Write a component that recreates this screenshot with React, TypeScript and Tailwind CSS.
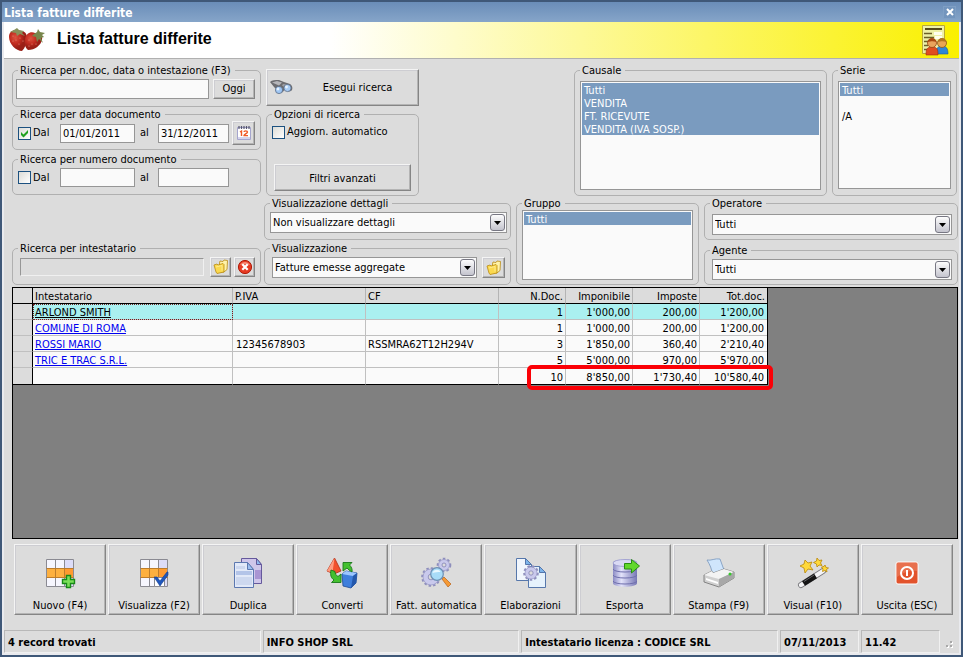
import { type ReactNode } from 'react';
import { clsx } from 'clsx';

const raised =
  'border border-t-[#f4f4f4] border-l-[#f4f4f4] border-r-[#858585] border-b-[#858585] bg-[#dcdcdc] shadow-[inset_-1px_-1px_0_#b4b4b4,inset_1px_1px_0_#cdcdd2]';
const field = 'border border-[#969696] bg-[#fafafa] outline-none';

/* Layout pieces */

function Group({
  title,
  className,
  bodyClassName,
  children,
}: {
  title: string;
  className?: string;
  bodyClassName?: string;
  children: ReactNode;
}) {
  return (
    <fieldset className={clsx('min-w-0 rounded-[5px] border border-[#b0b0b0]', className)}>
      <legend className="ml-[5px] h-3.5 pr-1 pl-0.5 leading-4 whitespace-nowrap">{title}</legend>
      <div className={bodyClassName}>{children}</div>
    </fieldset>
  );
}

function Dropdown({ label, value, className }: { label: string; value: string; className?: string }) {
  return (
    <div className={clsx('relative h-[21px]', className)}>
      <select
        aria-label={label}
        className={clsx(field, 'block h-full w-full appearance-none pl-0.5 leading-4')}
      >
        <option>{value}</option>
      </select>
      <span className="pointer-events-none absolute top-0.5 right-0.5 flex h-[17px] w-[15px] items-center justify-center rounded-[3px] border border-[#777783] bg-linear-to-b from-[#fdfdfd] to-[#c4c4ce]">
        <svg width="7" height="4" viewBox="0 0 7 4">
          <path d="M0 0h7L3.5 4z" fill="#000" />
        </svg>
      </span>
    </div>
  );
}

function ListBox({
  label,
  items,
  selected,
  className,
}: {
  label: string;
  items: string[];
  selected: string[];
  className?: string;
}) {
  return (
    <ul
      role="listbox"
      aria-label={label}
      aria-multiselectable="true"
      className={clsx(field, 'p-px', className)}
    >
      {items.map((item, i) => (
        <li
          key={i}
          role="option"
          aria-selected={selected.includes(item)}
          className={clsx(
            'h-[13px] pl-0.5 leading-4 whitespace-nowrap',
            selected.includes(item) && 'bg-[#7a9bbf] text-white'
          )}
        >
          {item}
        </li>
      ))}
    </ul>
  );
}

function Check({ label, checked }: { label: string; checked?: boolean }) {
  return (
    <label className="flex items-center gap-0.5 leading-4">
      <span className="relative flex">
        <input
          type="checkbox"
          defaultChecked={checked}
          className="peer size-[13px] appearance-none border border-[#1c5180] bg-linear-to-br from-[#dcdcd7] to-white"
        />
        <svg
          viewBox="0 0 13 13"
          className="pointer-events-none absolute inset-0 hidden size-[13px] peer-checked:block"
        >
          <path d="M3 5v3l2.500 2.500L10 6V3L5.500 7.500z" fill="#21a121" />
        </svg>
      </span>
      {label}
    </label>
  );
}

/* Icons */

function Strawberries() {
  return (
    <svg width="38" height="26" viewBox="0 0 38 26">
      <defs>
        <radialGradient id="berry" cx="35%" cy="35%">
          <stop offset="0" stopColor="#dc5340" />
          <stop offset="0.6" stopColor="#c22c20" />
          <stop offset="1" stopColor="#9a1f16" />
        </radialGradient>
      </defs>
      <path d="M1 10C1 4 6 2 10 4c6-1 9 2 9 7 0 5-2 10-5 13C8 24 1 17 1 10z" fill="url(#berry)" />
      <path d="M17 12c1-6 6-8 10-6 5 0 8 3 7 7-1 5-7 10-14 10-3-2-4-7-3-11z" fill="url(#berry)" />
      <path d="m2 5 4-2 3-2 2 2 5 1-2 2 3 3-5-2-3 2-1-3z" fill="#87905a" />
      <path d="m26 7 3-2 1-3 2 3 5 1-3 2 2 2-3 1 2 5-4-4-2 3-1-5-4-1z" fill="#78864c" />
      <g fill="#e8917c">
        <circle cx="5" cy="9" r=".6" />
        <circle cx="5" cy="14" r=".6" />
        <circle cx="8" cy="13" r=".6" />
        <circle cx="12" cy="11" r=".6" />
        <circle cx="11" cy="17" r=".6" />
        <circle cx="15" cy="14" r=".6" />
        <circle cx="21" cy="13" r=".6" />
        <circle cx="24" cy="17" r=".6" />
        <circle cx="21" cy="19" r=".6" />
        <circle cx="28" cy="17" r=".6" />
      </g>
    </svg>
  );
}

function ReportUsers() {
  return (
    <svg width="28" height="32" viewBox="0 0 28 32">
      <path d="M1.500 1.500h22v28h-22z" fill="#eef0a8" stroke="#b9a83a" />
      <path d="M4 4h17v2H4z" fill="#54491c" />
      <path d="M3 9.500h8M3 13.500h10M3 17.500h7M3 21.500h4M3 25.500h4" stroke="#6b6028" strokeWidth="1.500" />
      <path d="M13 8h8v3h-8zM14 12h7v3h-7z" fill="#fffff0" />
      <path d="M15 30c0-6 2-8 6-8s6 2 6 8z" fill="#2f86d6" stroke="#19579a" strokeWidth=".6" />
      <circle cx="21" cy="19" r="4.500" fill="#e9a552" stroke="#8d5413" strokeWidth=".8" />
      <path d="M16.500 18c1-5 8-5 9 0-3-1-5-1-9 0z" fill="#b27620" />
      <path d="M5 31c0-6 1-8 6-8s6 2 6 8z" fill="#e04e20" stroke="#a32c0c" strokeWidth=".6" />
      <circle cx="11" cy="19" r="4.500" fill="#e9a35c" stroke="#96430f" strokeWidth=".8" />
      <path d="M6.500 18c1-5 8-5 9 0-3-1-5-1-9 0z" fill="#a94712" />
    </svg>
  );
}

function Binoculars() {
  return (
    <svg width="24" height="18" viewBox="0 0 24 18">
      <path d="M1 3c2-2 5-2 9-2l5 2 6 2c3 2 3 6 1 7-3 1-5 0-6-3-1 4-4 6-6 4L5 8z" fill="#6d6d71" />
      <path d="M3 3.500 8 2l5 1.500-3 3z" fill="#b6b6ba" />
      <path d="m14 5 4 .5-2 3-3-2z" fill="#a0a0a4" />
      <circle cx="10" cy="11" r="3.600" fill="#9fc6f3" stroke="#5c6d88" strokeWidth=".8" />
      <circle cx="18.500" cy="9" r="3.600" fill="#a9cdf6" stroke="#5c6d88" strokeWidth=".8" />
      <circle cx="9" cy="10" r="1.400" fill="#e7f3ff" />
      <circle cx="17.500" cy="8" r="1.400" fill="#e7f3ff" />
    </svg>
  );
}

function Calendar() {
  return (
    <svg width="16" height="16" viewBox="0 0 16 16">
      <path d="M1.500 2.500h13v12h-13z" fill="#fff" stroke="#a5a5cd" />
      <path d="M2 12h12v2H2z" fill="#d5d5ee" />
      <path d="M3 1v3M5.500 1v3M8 1v3M10.500 1v3M13 1v3" stroke="#55556d" strokeWidth="1.200" />
      <path d="m4 7 1.500-1v5M8 7c0-1.500 3.500-1.500 3.500 0 0 1.300-3.500 2.500-3.500 3.600h4" fill="none" stroke="#f05a28" strokeWidth="1.400" />
    </svg>
  );
}

function Folder() {
  return (
    <svg width="16" height="16" viewBox="0 0 16 16">
      <path d="m6.500 4 .5-2 3 .5L11 1l3.500.5-.5 9-3 2.500H7z" fill="#fff3a8" stroke="#b98a12" strokeWidth=".8" />
      <path d="m1 6 3-1 1 1 5-1.500 1 1V13l-7 1.500L3 13z" fill="#fbd94e" stroke="#b98a12" strokeWidth=".8" />
      <path d="m3 8 6-1.500v5" fill="none" stroke="#fff0a0" strokeWidth=".8" />
    </svg>
  );
}

function Cancel() {
  return (
    <svg width="16" height="16" viewBox="0 0 16 16">
      <circle cx="8" cy="8" r="6.600" fill="#e63a22" stroke="#b01d0b" />
      <path d="M3 6c2-4 8-4 10 0-3-1-7-1-10 0z" fill="#f58b77" />
      <path d="m5.300 5.300 5.400 5.400M10.700 5.300l-5.400 5.400" stroke="#fff" strokeWidth="2.200" />
    </svg>
  );
}

function GridBase() {
  return (
    <>
      <path d="M2.500 2.500h27v27h-27z" fill="#f6f6fe" />
      <path d="M20.500 2.500h9v9h-9zM20.500 20.500h9v9h-9z" fill="#dcdcf8" />
      <path d="M2.500 11.500h27v9h-27z" fill="#fdb040" />
      <path d="M20.500 11.500h9v9h-9z" fill="#ff9a30" />
      <path d="M2.500 2.500h27v27h-27zM11.500 2.500v27M20.500 2.500v27M2.500 11.500h27M2.500 20.500h27" fill="none" stroke="#8a8a92" />
      <path d="M2.500 11.500h27M2.500 20.500h27M11.500 11.500v9M20.500 11.500v9" stroke="#bd7d2b" />
    </>
  );
}

function GridAdd() {
  return (
    <svg width="32" height="32" viewBox="0 0 32 32">
      <GridBase />
      <path d="M22.500 18.500h4v4h4v4h-4v4h-4v-4h-4v-4h4z" fill="#7be05a" stroke="#178a17" strokeWidth="1.400" />
    </svg>
  );
}

function GridView() {
  return (
    <svg width="32" height="32" viewBox="0 0 32 32">
      <GridBase />
      <path d="M16.500 20.500h10v9h-10z" fill="#fff" stroke="#8a8a92" />
      <path d="M16 20h3l3 4 7-9h1v3l-8 11z" fill="#1f56bd" stroke="#123b8c" strokeWidth=".6" />
    </svg>
  );
}

function Duplicate() {
  return (
    <svg width="32" height="32" viewBox="0 0 32 32">
      <path d="M9.500 1.500h15l5 6v19h-20z" fill="#cfc6ea" stroke="#65599c" />
      <path d="M24.500 1.500v6h5z" fill="#8fb8ee" stroke="#65599c" />
      <path d="M23 13h6v9h-6z" fill="#a995d3" />
      <path d="M2.500 5.500h13l6 7v18h-19z" fill="#e2e9f8" stroke="#5c78b0" />
      <path d="M15.500 5.500v7h6z" fill="#9ec0f0" stroke="#5c78b0" />
      <path d="M4 14h16v4H4z" fill="#b3c4e8" />
      <path d="M4 9h9v3H4zM4 20h16v8H4z" fill="#cdd8ef" />
    </svg>
  );
}

function Convert() {
  return (
    <svg width="32" height="32" viewBox="0 0 32 32">
      <path d="M8.500 1 1 14l7 3 7-3z" fill="#f2512e" stroke="#ad2b12" strokeWidth=".8" />
      <path d="m8.500 1-2 14.500L1 14z" fill="#ff9c80" />
      <path d="m16 17 4-3 11 2-1 10-5 5-8-2z" fill="#3f7fdc" stroke="#1d4a94" strokeWidth=".8" />
      <path d="m16 17 4-3 11 2-4 3z" fill="#9cc6ff" />
      <path d="m27 19 4-3-1 10-5 5z" fill="#2458ac" />
      <path d="M17 5.500h9L23.500 8c2 2 3 4 2.500 7l-3-2c-1-1-1-1-2-2L17 14z" fill="#44c030" stroke="#187818" strokeWidth=".9" />
      <path d="M5 13c-1 5 0 8 3 10l-2.500 2.500H15V17l-3 2.500c-2-1-3-3-3-5z" fill="#44c030" stroke="#187818" strokeWidth=".9" />
    </svg>
  );
}

function Gear({ x, y, r }: { x: number; y: number; r: number }) {
  return (
    <g transform={`translate(${x} ${y})`}>
      <circle r={r} fill="none" stroke="#8e8ebc" strokeWidth="2.600" strokeDasharray="2.400 2" />
      <circle r={r - 0.5} fill="#c9c9ec" stroke="#9a9ac8" strokeWidth=".8" />
      <circle r={r / 3} fill="#dcdcdc" stroke="#8383b5" strokeWidth=".8" />
    </g>
  );
}

function AutoInvoice() {
  return (
    <svg width="32" height="32" viewBox="0 0 32 32">
      <Gear x={24} y={8} r={6} />
      <Gear x={11} y={20} r={8.5} />
      <path d="m22 22 2-2 7 7-3 3z" fill="#f59a35" stroke="#b9611a" strokeWidth=".7" />
      <circle cx="17" cy="17" r="6.300" fill="#a8dcf8" stroke="#6c8fb3" strokeWidth="1.200" />
      <path d="M12.500 16c1-4 7-4 8-1-3 0-5 0-8 1z" fill="#e8f8ff" />
    </svg>
  );
}

function Process() {
  return (
    <svg width="32" height="32" viewBox="0 0 32 32">
      <path d="M1.500 1.500h9l6 6v16h-15z" fill="#f1f6fd" stroke="#5677ab" />
      <path d="M10.500 1.500v6h6z" fill="#7db4ea" stroke="#5677ab" />
      <path d="M13.500 9.500h11l6 6v15h-17z" fill="#e6f2fc" stroke="#5677ab" />
      <path d="M24.500 9.500v6h6z" fill="#7db4ea" stroke="#5677ab" />
      <Gear x={16} y={16} r={6.5} />
    </svg>
  );
}

function Export() {
  return (
    <svg width="32" height="32" viewBox="0 0 32 32">
      <defs>
        <linearGradient id="drum">
          <stop offset="0" stopColor="#8b8bc4" />
          <stop offset="0.35" stopColor="#e2e2fa" />
          <stop offset="1" stopColor="#7777b4" />
        </linearGradient>
      </defs>
      <path d="M4 6c0-5 24-5 24 0v20c0 5-24 5-24 0z" fill="url(#drum)" />
      <ellipse cx="16" cy="6" rx="12" ry="3.500" fill="#d9d9f4" stroke="#9191c6" strokeWidth=".7" />
      <path d="M4 12c1 4 23 4 24 0M4 18c1 4 23 4 24 0M4 24c1 4 23 4 24 0" fill="none" stroke="#6f6fad" />
      <path d="M15.500 6.500h7v-4l8 6.500-8 7v-4h-7z" fill="#62d82c" stroke="#2a8f12" />
    </svg>
  );
}

function Printer() {
  return (
    <svg width="32" height="32" viewBox="0 0 32 32">
      <path d="M4 3c4 1 8-2 13-1l4 11-12 4c0-5-2-9-5-14z" fill="#cfe5fc" stroke="#7795bb" strokeWidth=".8" />
      <path d="m1 18 8-4 1 2 11-4 10 3v6l-15 9-15-5z" fill="#d0d0d0" stroke="#707070" strokeWidth=".8" />
      <path d="m1 18 8-4 1 2 11-4 10 3-15 7z" fill="#f3f3f3" />
      <path d="m16 22 15-7v6l-15 9z" fill="#a8a8a8" />
      <path d="m3 21 12 4v2L3 23z" fill="#fff" />
      <circle cx="27" cy="17" r="1.500" fill="#35c92b" />
    </svg>
  );
}

function Wand() {
  return (
    <svg width="32" height="32" viewBox="0 0 32 32">
      <path d="M4 28 26 14" stroke="#77777b" strokeWidth="6" strokeLinecap="round" />
      <path d="M4 28 26 14" stroke="#f4f4f6" strokeWidth="4.400" strokeLinecap="round" />
      <path d="m6.500 26.500 12-7.600" stroke="#151515" strokeWidth="5.600" />
      <path d="m7 24.500 10-6.500" stroke="#66666a" />
      <g fill="#ffd93a" stroke="#b98608" strokeWidth=".8">
        <path d="m8 3 3 3 4-1-2 4 3 4-5-1-3 4-1-5-4-2 4-2z" />
        <path d="m20 1 2 2.500 3-.5-1.500 3 1.500 2.500-3-.5-2 2-.5-3-3-1.500 3-1.500z" />
        <path d="m28 8 1 2.500 2.500.5-2 1.500.5 2.500-2-1.500-2.500 1 .5-2.500-1.500-2 2.500-.5z" />
      </g>
    </svg>
  );
}

function Exit() {
  return (
    <svg width="32" height="32" viewBox="0 0 32 32">
      <rect x="5" y="5" width="22" height="22" rx="2" fill="#e2532c" stroke="#fff" />
      <path d="M6 6h20v8C18 13 12 16 6 20z" fill="#e8704e" />
      <circle cx="16" cy="16" r="6" fill="none" stroke="#fff" strokeWidth="2" />
      <path d="M16 13v6" stroke="#fff" strokeWidth="2" />
    </svg>
  );
}

/* Data */

const rows = [
  { name: 'ARLOND SMITH', piva: '', cf: '', n: '1', net: "1'000,00", tax: '200,00', total: "1'200,00" },
  { name: 'COMUNE DI ROMA', piva: '', cf: '', n: '1', net: "1'000,00", tax: '200,00', total: "1'200,00" },
  { name: 'ROSSI MARIO', piva: '12345678903', cf: 'RSSMRA62T12H294V', n: '3', net: "1'850,00", tax: '360,40', total: "2'210,40" },
  { name: 'TRIC E TRAC S.R.L.', piva: '', cf: '', n: '5', net: "5'000,00", tax: '970,00', total: "5'970,00" },
  { name: '', piva: '', cf: '', n: '10', net: "8'850,00", tax: "1'730,40", total: "10'580,40" },
];

const columns = ['Intestatario', 'P.IVA', 'CF', 'N.Doc.', 'Imponibile', 'Imposte', 'Tot.doc.'];

const actions = [
  { label: 'Nuovo (F4)', icon: <GridAdd /> },
  { label: 'Visualizza (F2)', icon: <GridView /> },
  { label: 'Duplica', icon: <Duplicate /> },
  { label: 'Converti', icon: <Convert /> },
  { label: 'Fatt. automatica', icon: <AutoInvoice /> },
  { label: 'Elaborazioni', icon: <Process /> },
  { label: 'Esporta', icon: <Export /> },
  { label: 'Stampa (F9)', icon: <Printer /> },
  { label: 'Visual (F10)', icon: <Wand /> },
  { label: 'Uscita (ESC)', icon: <Exit /> },
];

const causali = ['Tutti', 'VENDITA', 'FT. RICEVUTE', 'VENDITA (IVA SOSP.)'];

function InvoiceTable() {
  return (
    <div className="relative w-[755px]">
      <table className="w-full table-fixed border-separate border-spacing-0 border-r border-black">
        <colgroup>
          <col className="w-5" />
          <col className="w-[200px]" />
          <col className="w-[133px]" />
          <col className="w-[133px]" />
          <col className="w-[67px]" />
          <col className="w-[67px]" />
          <col className="w-[67px]" />
          <col />
        </colgroup>
        <thead>
          <tr className="h-4 bg-[#dcdcdc]">
            <th className="border-r border-b border-black p-0" />
            {columns.map((c, i) => (
              <th
                key={c}
                className={clsx(
                  'border-r border-b border-r-[#b4b4b4] border-b-black px-0.5 pt-0.5 pb-0 leading-[13px] font-normal last:border-r-0',
                  i > 2 ? 'text-right' : 'text-left'
                )}
              >
                {c}
              </th>
            ))}
          </tr>
        </thead>
        <tbody>
          {rows.map((r, i) => (
            <tr
              key={i}
              className={clsx(
                'h-4 *:border-b *:border-b-[#c0c0c0] *:pt-0.5 *:pb-0 *:leading-[13px] last:h-[17px] last:*:border-b-black',
                i === 0 ? 'bg-[#aaf0f0]' : 'bg-[#fafafa]'
              )}
            >
              <td className="border-r border-r-black bg-[#dcdcdc] px-0" />
              <td
                className={clsx(
                  'border-r border-r-[#c0c0c0] px-0.5',
                  i === 0 && 'outline-1 -outline-offset-1 outline-[#702020] outline-dotted'
                )}
              >
                <a href="#" className={i === 0 ? 'text-black underline' : 'text-[#0000f0] underline'}>
                  {r.name}
                </a>
              </td>
              <td className="border-r border-r-[#c0c0c0] px-[3px]">{r.piva}</td>
              <td className="border-r border-r-[#c0c0c0] px-0.5">{r.cf}</td>
              <td className="border-r border-r-[#c0c0c0] px-0.5 text-right">{r.n}</td>
              <td className="border-r border-r-[#c0c0c0] px-0.5 text-right">{r.net}</td>
              <td className="border-r border-r-[#c0c0c0] px-0.5 text-right">{r.tax}</td>
              <td className="px-[3px] text-right">{r.total}</td>
            </tr>
          ))}
        </tbody>
      </table>
      <div className="pointer-events-none absolute -right-[5px] -bottom-[5px] h-[25px] w-[246px] rounded-[5px] border-4 border-[#fb0006]" />
    </div>
  );
}

export default function App() {
  return (
    <div className="flex min-h-screen flex-col border-2 border-[#3f5878] bg-[#dcdcdc] font-['DejaVu_Sans_Condensed','DejaVu_Sans',sans-serif] text-[11px] leading-3.5 text-black">
      <div className="flex h-5 items-center justify-between bg-linear-to-b from-[#6a8db8] to-[#86a5c9] pr-1.5 pl-0.5">
        <h2 className="pt-0.5 text-[12px] leading-5 font-bold text-white">Lista fatture differite</h2>
        <button
          aria-label="Chiudi"
          className="flex size-[11px] items-center justify-center bg-[#7395bd] shadow-[0_0_0_1px_#7f9fc4]"
        >
          <svg width="8" height="8" viewBox="0 0 8 8">
            <path d="m1 1 6 6M7 1 1 7" stroke="#fff" strokeWidth="2" />
          </svg>
        </button>
      </div>

      <div className="flex grow flex-col border-x-2 border-b-2 border-[#e9eaee]">
        <header className="flex h-[37px] items-center border-b border-[#b0b0b0] bg-linear-to-r/srgb from-white from-34% to-[#faf000] pr-2.5 pl-1">
          <Strawberries />
          <h1 className="ml-[11px] grow pb-0.5 font-['Liberation_Sans',sans-serif] text-[16px] leading-5 font-bold">
            Lista fatture differite
          </h1>
          <ReportUsers />
        </header>

        <main className="flex grow flex-col pr-px pl-2">
          <div className="flex pt-1">
            <div className="flex w-[249px] flex-col">
              <Group
                title="Ricerca per n.doc, data o intestazione (F3)"
                bodyClassName="flex items-center gap-1 pt-0.5 pr-[5px] pb-[7px] pl-[3px]"
              >
                <input aria-label="Ricerca" className={clsx(field, 'h-5 w-0 grow')} />
                <button className={clsx(raised, 'h-5 w-[42px]')}>Oggi</button>
              </Group>
              <Group
                title="Ricerca per data documento"
                bodyClassName="flex items-center pr-[5px] pb-1 pl-[5px]"
              >
                <Check label="Dal" checked />
                <input aria-label="Data iniziale" defaultValue="01/01/2011" className={clsx(field, 'ml-auto h-[19px] w-[75px] px-0.5')} />
                <span className="w-[23px] pl-[5px]">al</span>
                <input aria-label="Data finale" defaultValue="31/12/2011" className={clsx(field, 'h-[19px] w-[71px] px-0.5')} />
                <button aria-label="Calendario" className={clsx(raised, 'ml-[3px] flex h-6 w-[23px] items-center justify-center')}>
                  <Calendar />
                </button>
              </Group>
              <Group
                title="Ricerca per numero documento"
                className="mt-0.5"
                bodyClassName="flex items-center pr-[31px] pb-[5px] pl-[5px]"
              >
                <Check label="Dal" />
                <input aria-label="Numero iniziale" className={clsx(field, 'my-0.5 ml-auto h-[19px] w-[75px]')} />
                <span className="w-[23px] pl-[5px]">al</span>
                <input aria-label="Numero finale" className={clsx(field, 'h-[19px] w-[71px]')} />
              </Group>
            </div>

            <div className="ml-[5px] flex w-[153px] flex-col">
              <button className={clsx(raised, 'mt-1.5 flex h-[37px] items-center pl-0.5')}>
                <Binoculars />
                <span className="grow pt-px pl-1">Esegui ricerca</span>
              </button>
              <Group title="Opzioni di ricerca" className="mt-px grow" bodyClassName="flex flex-col px-[5px] pt-[3px]">
                <Check label="Aggiorn. automatico" />
                <button className={clsx(raised, 'mx-0.5 mt-6 h-[27px] pt-0.5')}>Filtri avanzati</button>
              </Group>
            </div>

            <Group title="Causale" className="ml-auto w-[253px]" bodyClassName="flex h-[118px] px-[5px] pt-1 pb-[5px]">
              <ListBox label="Causale" items={causali} selected={causali} className="grow" />
            </Group>
            <Group title="Serie" className="mr-px ml-[5px] w-[125px]" bodyClassName="flex h-[118px] px-[5px] pt-1 pb-1.5">
              <ListBox label="Serie" items={['Tutti', '', '/A']} selected={['Tutti']} className="grow" />
            </Group>
          </div>

          <div className="flex items-stretch">
            <Group
              title="Ricerca per intestatario"
              className="w-[249px] self-end"
              bodyClassName="flex items-center px-[5px] pt-0.5 pb-[7px]"
            >
              <input
                aria-label="Intestatario"
                readOnly
                className="ml-0.5 h-[18px] w-0 grow border border-t-[#969696] border-r-[#f0f0f0] border-b-[#f0f0f0] border-l-[#969696] outline-none"
              />
              <button aria-label="Scegli intestatario" className={clsx(raised, 'ml-1.5 flex h-5 w-[21px] items-center justify-center')}>
                <Folder />
              </button>
              <button aria-label="Cancella intestatario" className={clsx(raised, 'ml-[3px] flex h-5 w-[21px] items-center justify-center')}>
                <Cancel />
              </button>
            </Group>

            <div className="ml-[3px] flex w-[247px] flex-col gap-px">
              <Group title="Visualizzazione dettagli" bodyClassName="pt-0.5 pr-[3px] pb-1.5 pl-[5px]">
                <Dropdown label="Visualizzazione dettagli" value="Non visualizzare dettagli" />
              </Group>
              <Group title="Visualizzazione" bodyClassName="flex pt-0.5 pr-[5px] pb-1.5 pl-[7px]">
                <Dropdown label="Visualizzazione" value="Fatture emesse aggregate" className="grow" />
                <button aria-label="Scegli visualizzazione" className={clsx(raised, 'ml-[5px] flex h-[21px] w-[23px] items-center justify-center')}>
                  <Folder />
                </button>
              </Group>
            </div>

            <Group title="Gruppo" className="ml-[5px] w-[183px]" bodyClassName="flex h-[74px] px-[5px] pb-1">
              <ListBox label="Gruppo" items={['Tutti']} selected={['Tutti']} className="grow" />
            </Group>

            <div className="ml-[5px] flex grow flex-col justify-between">
              <Group title="Operatore" bodyClassName="pt-1 pr-[5px] pb-1 pl-[7px]">
                <Dropdown label="Operatore" value="Tutti" />
              </Group>
              <Group title="Agente" bodyClassName="pt-0.5 pr-[5px] pb-1 pl-[7px]">
                <Dropdown label="Agente" value="Tutti" />
              </Group>
            </div>
          </div>

          <section className="mt-0.5 grow border border-black bg-[#808080]">
            <InvoiceTable />
          </section>

          <nav className="mt-[5px] mr-[5px] ml-0.5 flex gap-0.5">
            {actions.map((a) => (
              <button key={a.label} className={clsx(raised, 'flex h-[71px] flex-1 flex-col items-center justify-between pt-3 pb-px whitespace-nowrap')}>
                {a.icon}
                {a.label}
              </button>
            ))}
          </nav>
        </main>

        <footer className="mt-[15px] flex h-[23px] gap-0.5 font-bold whitespace-nowrap *:border *:border-t-[#b8b8b8] *:border-r-[#f0f0f0] *:border-b-[#f0f0f0] *:border-l-[#b8b8b8] *:px-[3px] *:leading-6">
          <div className="flex-1">4 record trovati</div>
          <div className="flex-1">INFO SHOP SRL</div>
          <div className="flex-1">Intestatario licenza : CODICE SRL</div>
          <div className="w-[79px]">07/11/2013</div>
          <div className="w-[79px]">11.42</div>
          <svg width="17" height="22" viewBox="0 0 17 22" className="border-0! p-0!">
            <path d="M8 11h2v2H8zM8 15h2v2H8zM4 15h2v2H4z" fill="#a8a8a8" />
            <path d="M10 12h1v2H9v-1h1zM10 16h1v2H9v-1h1zM6 16h1v2H5v-1h1z" fill="#fff" />
          </svg>
        </footer>
      </div>
    </div>
  );
}
